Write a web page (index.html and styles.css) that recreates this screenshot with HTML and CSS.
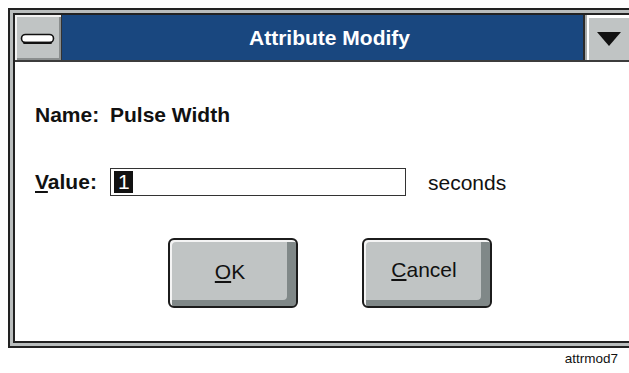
FILE: index.html
```html
<!DOCTYPE html>
<html>

<head>
	<title>Attribute Modify</title>
	<link rel="stylesheet" href="styles.css">
</head>

<body>
	<div class="window">
		<div class="frame">
			<div class="titlebar">
				<div class="sys-btn">
					<svg width="36" height="12" viewBox="0 0 36 12">
						<rect x="1.5" y="1.5" width="32" height="8" rx="4" fill="#fff" stroke="#111" stroke-width="1.6"/>
						<path d="M4 9.8 H31" stroke="#111" stroke-width="2.2" stroke-linecap="round"/>
					</svg>
				</div>
				<div class="caption">Attribute Modify</div>
				<div class="drop-btn">
					<svg width="26" height="16" viewBox="0 0 26 16">
						<polygon points="1,1 25,1 13,15" fill="#111"/>
					</svg>
				</div>
			</div>

			<div class="content">
				<div class="row name-row">
					<span class="lbl">Name:</span>
					<span>Pulse Width</span>
				</div>
				<div class="row value-row">
					<label class="lbl" for="value"><u>V</u>alue:</label>
					<div class="field" id="value"><span class="sel">1</span></div>
					<span class="unit">seconds</span>
				</div>
				<div class="actions">
					<button class="btn" type="button"><span><u>O</u>K</span></button>
					<button class="btn btn-cancel" type="button"><span><u>C</u>ancel</span></button>
				</div>
			</div>
		</div>
	</div>
	<div class="fig-id">attrmod7</div>
</body>

</html>
```

FILE: styles.css
```css
body {
	margin: 8px 0 8px 8px;
	font-family: "Liberation Sans", Arial, sans-serif;
	color: #111;
	background: #fff;
}

/* the dialog runs off the right edge of the shot, so no right border */
.window {
	border: 2px solid #222;
	border-right: none;
	padding: 3px 0 3px 3px;
	background: #b9bdbd;
}

.frame {
	border: 2px solid #222;
	border-right: none;
	background: #fff;
}

.titlebar {
	display: flex;
	height: 45px;
	border-bottom: 2px solid #3c3c3c;
}

.sys-btn {
	width: 46px;
	display: flex;
	align-items: center;
	justify-content: center;
	background: #c0c4c4;
	border-right: 1px solid #333;
	box-shadow: inset 2px 2px 0 #f2f2f2, inset -2px -2px 0 #8a8e8e;
}

.sys-btn svg {
	margin-top: 2px;
}

.caption {
	flex: 1;
	background: #19477f;
	color: #fff;
	font-weight: bold;
	font-size: 21px;
	line-height: 45px;
	text-align: center;
	padding-left: 14px;
}

.drop-btn {
	width: 46px;
	display: flex;
	align-items: center;
	justify-content: center;
	box-sizing: border-box;
	background: #c0c4c4;
	border-left: 2px solid #2a2a2a;
	box-shadow: inset 2px 0 0 #a8acac, inset 4px 3px 0 #fff;
}

.drop-btn svg {
	margin-left: 3px;
	margin-top: 2px;
}

.content {
	padding: 41px 0 33px;
	font-size: 21px;
}

.row {
	display: flex;
	align-items: center;
	padding-left: 20px;
}

.lbl {
	width: 75px;
	font-weight: bold;
}

.name-row {
	height: 24px;
	font-weight: bold;
}

.value-row {
	height: 28px;
	margin-top: 41px;
}

.field {
	width: 296px;
	height: 28px;
	box-sizing: border-box;
	border: 1px solid #333;
	padding: 2px 3px;
	display: flex;
	align-items: center;
}

.sel {
	background: #111;
	color: #fff;
	line-height: 22px;
	padding: 0 3px 0 4px;
}

.unit {
	margin-left: 22px;
	padding-top: 2px;
}

.actions {
	display: flex;
	justify-content: center;
	gap: 64px;
	margin-top: 42px;
	padding-left: 16px;
}

.btn {
	width: 130px;
	height: 70px;
	box-sizing: border-box;
	border: 2px solid #1c1c1c;
	border-radius: 6px;
	padding: 0;
	background: #c0c4c4;
	font-family: inherit;
	font-size: 21px;
	color: #111;
	box-shadow: inset 2px 2px 0 #f4f4f4, inset -9px -6px 0 #808888;
	display: flex;
	align-items: center;
	justify-content: center;
}

.btn span {
	margin: 0 6px 2px 0;
}

.btn-cancel span {
	margin-bottom: 7px;
}

.fig-id {
	text-align: right;
	padding-right: 11px;
	margin-top: 3px;
	font-size: 13.5px;
}
```
